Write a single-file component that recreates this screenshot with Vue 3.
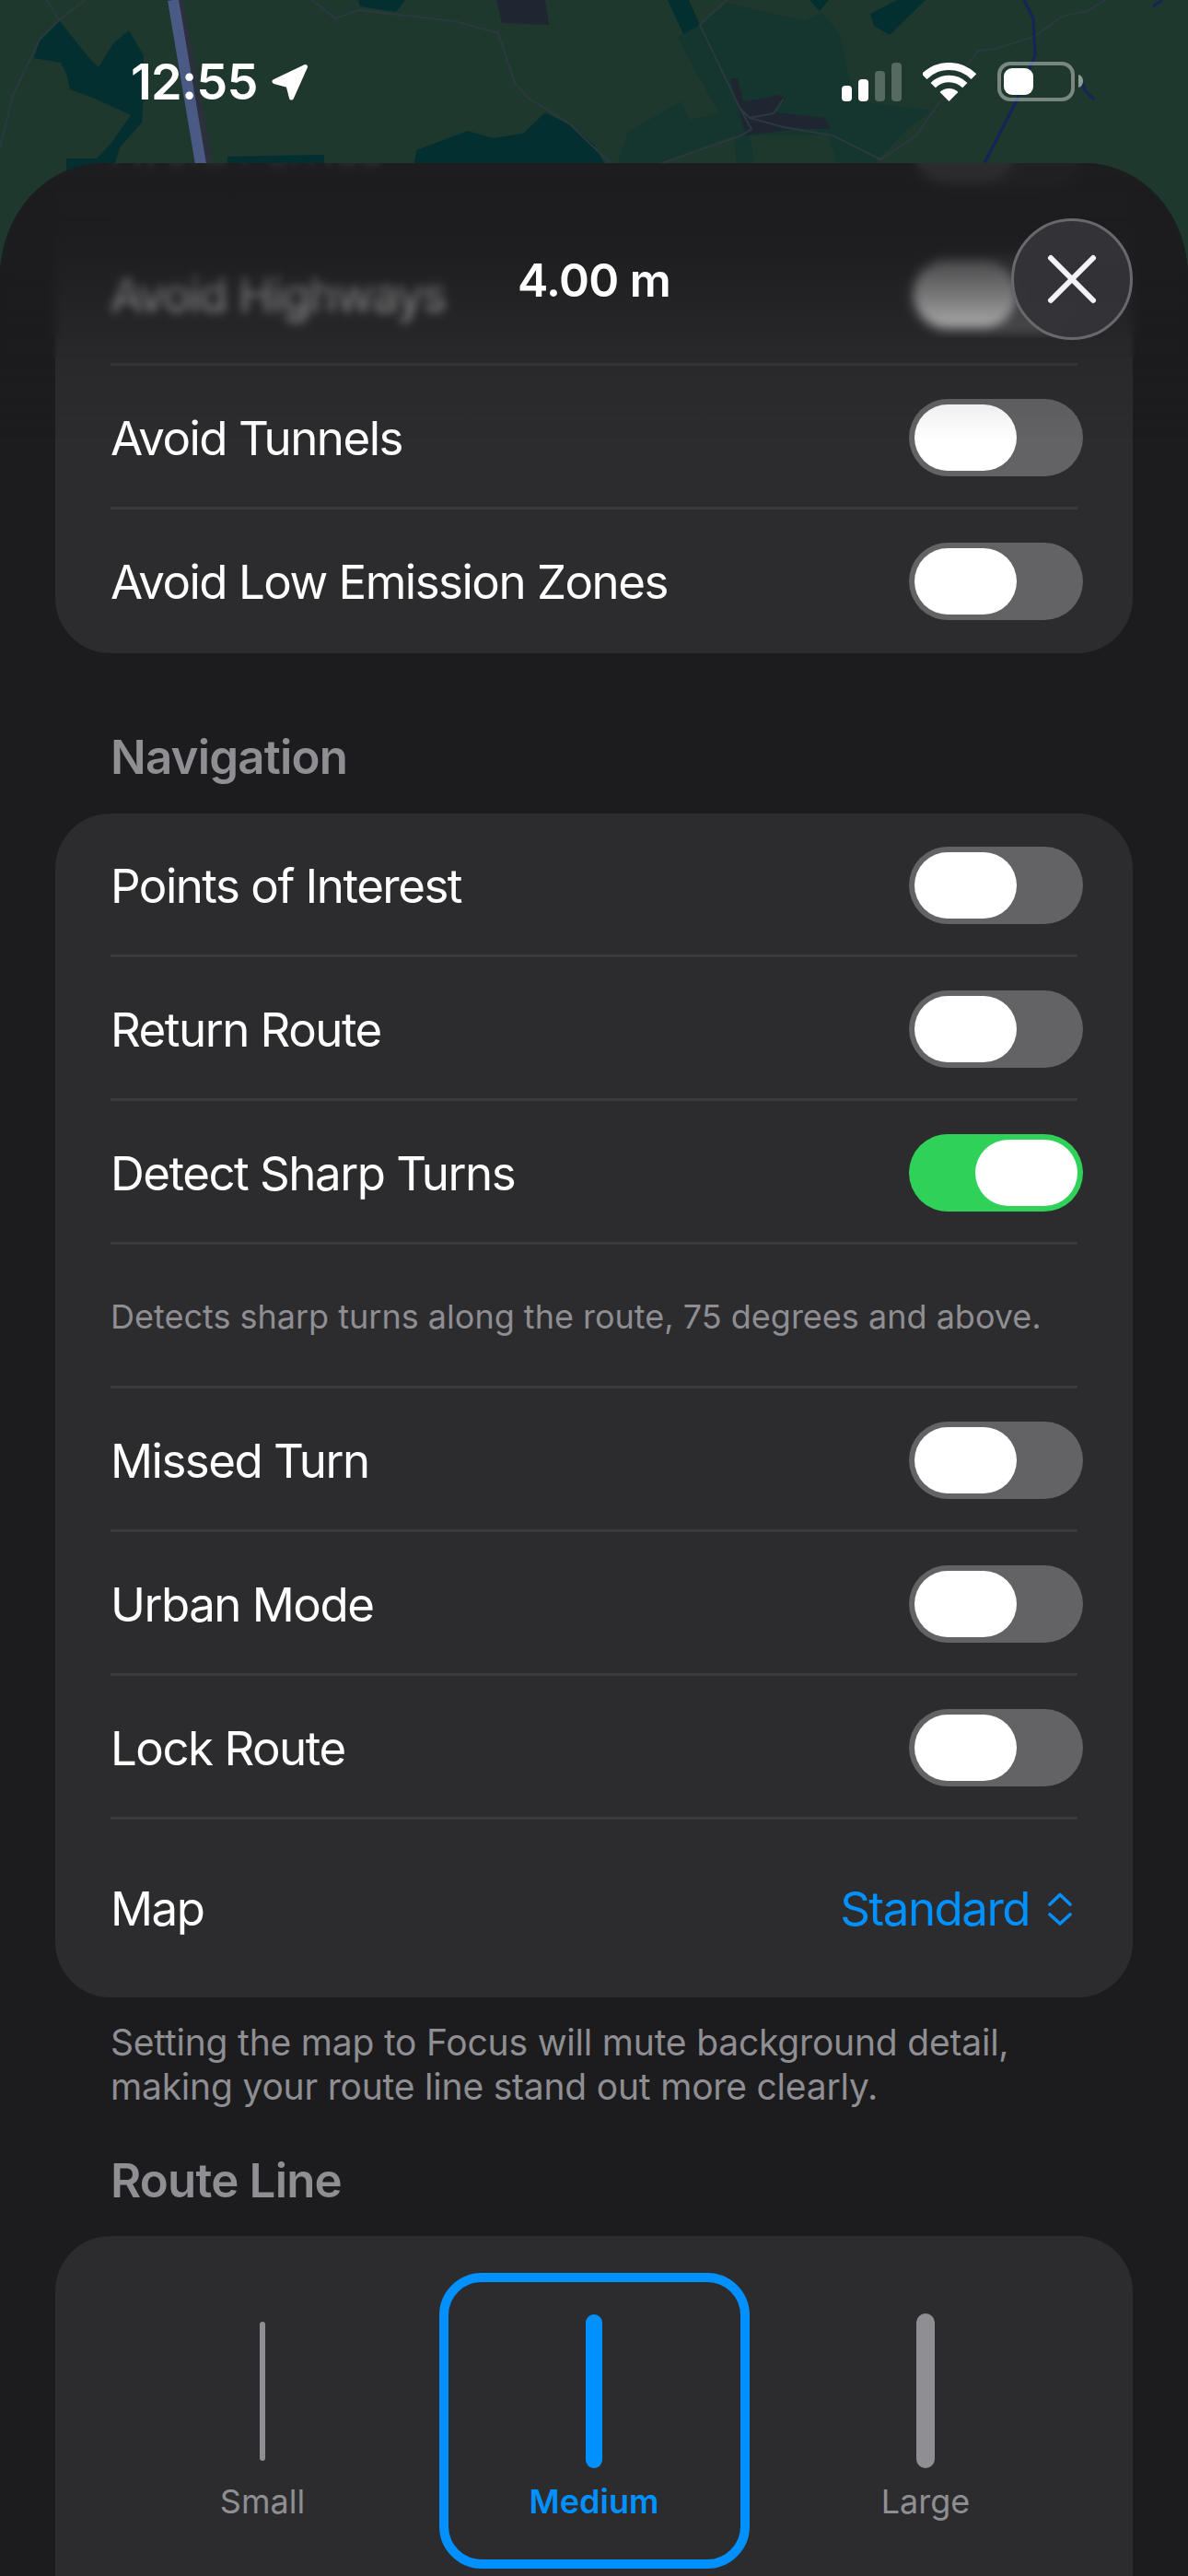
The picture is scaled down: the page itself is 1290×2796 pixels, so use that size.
<template>
  <div class="screen">
    <!-- map behind the sheet -->
    <svg class="map" width="1290" height="190" viewBox="0 0 1290 190">
      <polygon fill="#15352f" points="760,27 789,3 875,23 892,13 912,37 921,80 933,110 1011,120 986,140 953,173 953,190 912,190 900,147 814,147 822,190 801,190 797,147 715,177 666,190 682,143 740,110 748,130 781,123 735,40" />
      <g fill="#032f30">
        <polygon points="64,22 43,43 37,63 66,68 72,80 76,97 103,107 142,125 121,155 105,172 72,172 72,190 121,190 130,160 154,133 156,100 156,60 140,33 123,47 107,73 97,63" />
        <polygon points="389,0 391,7 430,13 440,0" />
        <polygon points="448,190 452,163 508,142 535,150 568,145 592,122 621,137 645,157 663,190" />
        <polygon points="247,170 352,168 352,190 247,190" />
        <polygon points="725,0 748,0 760,27 742,37" />
        <polygon points="879,0 900,0 890,12" />
        <polygon points="1005,0 974,30 966,38 949,28 945,15 974,0" />
      </g>
      <g fill="#1f2632">
        <polygon points="539,0 545,25 596,27 592,0" />
        <polygon points="793,85 801,85 807,110 847,103 853,107 842,122 896,128 902,140 867,140 842,143 810,147 803,123" />
      </g>
      <g fill="none" stroke="#2b393e" stroke-width="2">
        <polyline points="51,0 64,22 92,0" />
        <polyline points="64,22 43,43 14,103 0,160" />
        <polyline points="339,0 364,20 389,11 494,23 541,36 559,90 572,105 619,135 645,160 663,177" />
        <polyline points="789,0 760,27 803,117 814,128 840,123 851,107" />
        <polyline points="803,117 816,140 805,147 719,177" />
        <polyline points="814,128 851,138 904,147 956,173 995,147 1023,107 1056,63 1062,55 1081,53 1122,40 1155,17 1180,12 1200,0" />
      </g>
      <g fill="none" stroke="#14255a" stroke-width="3">
        <polyline points="1112,0 1122,20 1124,60 1102,113 1069,177" />
        <polyline points="1176,90 1178,98 1188,108" />
        <polyline points="1262,0 1252,7" />
      </g>
      <line x1="193" y1="0" x2="227" y2="190" stroke="#2b303c" stroke-width="12" />
      <line x1="188" y1="0" x2="220" y2="190" stroke="#4a5a85" stroke-width="12" />
    </svg>

    <div class="status">
      <div class="clock">
        <span class="time">12:55</span>
        <svg class="arrow" width="41" height="40" viewBox="0 0 41 40">
          <path d="M37.5 3.5 L4 19.5 L19 23.5 L22.5 37 Z" fill="#fff" stroke="#fff" stroke-width="5" stroke-linejoin="round" />
        </svg>
      </div>
      <div class="indicators">
        <svg width="65" height="42" viewBox="0 0 65 42">
          <rect x="0" y="25" width="11" height="17" rx="4" fill="#fff" />
          <rect x="18" y="18" width="11" height="24" rx="4" fill="#fff" />
          <rect x="36" y="9" width="11" height="33" rx="4" fill="#fff" opacity="0.25" />
          <rect x="54" y="0" width="11" height="42" rx="4" fill="#fff" opacity="0.25" />
        </svg>
        <svg width="58" height="42" viewBox="0 0 58 42">
          <path d="M1.6 15.1 A38 38 0 0 1 55.4 15.1" fill="none" stroke="#fff" stroke-width="8" />
          <path d="M11.2 24.7 A24.5 24.5 0 0 1 45.8 24.7" fill="none" stroke="#fff" stroke-width="7.5" />
          <path d="M28.5 42 L18.6 32.1 A14 14 0 0 1 38.4 32.1 Z" fill="#fff" />
        </svg>
        <svg width="94" height="44" viewBox="0 0 94 44">
          <rect x="2" y="2" width="80" height="39" rx="12" fill="none" stroke="#fff" stroke-opacity="0.4" stroke-width="4" />
          <rect x="7" y="7" width="32" height="29" rx="9" fill="#fff" />
          <path d="M88 14 C91.5 15 93 18 93 21 C93 24 91.5 27 88 28 Z" fill="#fff" opacity="0.5" />
        </svg>
      </div>
    </div>

    <div class="sheet">
      <div class="content">
        <div class="card first">
          <div v-for="row in avoidRows" :key="row" class="row">
            <div class="row-inner">
              <span>{{ row }}</span>
              <div class="toggle"><div class="thumb"></div></div>
            </div>
          </div>
        </div>

        <h3 class="section">Navigation</h3>
        <div class="card">
          <div v-for="row in navRows" :key="row.label" class="row">
            <div class="row-inner">
              <span v-if="row.help" class="help">{{ row.label }}</span>
              <span v-else>{{ row.label }}</span>
              <div v-if="!row.help" class="toggle" :class="{ on: row.on }"><div class="thumb"></div></div>
            </div>
          </div>
          <div class="row map-row">
            <div class="row-inner">
              <span>Map</span>
              <div class="picker">
                <span>Standard</span>
                <svg width="26" height="36" viewBox="0 0 26 36">
                  <path d="M2 13 L13 2.5 L24 13 M2 24 L13 34 L24 24" fill="none" stroke="#0091ff" stroke-width="3.6" stroke-linecap="round" stroke-linejoin="round" />
                </svg>
              </div>
            </div>
          </div>
        </div>
        <p class="note">Setting the map to Focus will mute background detail,<br>making your route line stand out more clearly.</p>

        <h3 class="section route">Route Line</h3>
        <div class="card widths">
          <div v-for="opt in lineOptions" :key="opt.label" class="option" :class="{ selected: opt.selected }">
            <div class="bar-slot">
              <div class="bar" :style="{ width: opt.w + 'px', height: opt.h + 'px' }"></div>
            </div>
            <span>{{ opt.label }}</span>
          </div>
        </div>
      </div>

      <div class="blur soft"></div>
      <div class="blur strong"></div>
      <div class="fade"></div>
      <div class="title">4.00 m</div>
      <button class="close">
        <svg width="56" height="56" viewBox="0 0 56 56">
          <path d="M5 5 L51 51 M51 5 L5 51" stroke="#f2f2f7" stroke-width="6" stroke-linecap="round" />
        </svg>
      </button>
    </div>
  </div>
</template>

<script setup>
const avoidRows = ['Avoid Ferries', 'Avoid Highways', 'Avoid Tunnels', 'Avoid Low Emission Zones']

const navRows = [
  { label: 'Points of Interest' },
  { label: 'Return Route' },
  { label: 'Detect Sharp Turns', on: true },
  { label: 'Detects sharp turns along the route, 75 degrees and above.', help: true },
  { label: 'Missed Turn' },
  { label: 'Urban Mode' },
  { label: 'Lock Route' },
]

const lineOptions = [
  { label: 'Small', w: 6, h: 151 },
  { label: 'Medium', w: 18, h: 167, selected: true },
  { label: 'Large', w: 20, h: 168 },
]
</script>

<style scoped>
.screen {
  position: relative;
  width: 1290px;
  height: 2796px;
  overflow: hidden;
  background: #1e382e;
  font-family: Inter, "Liberation Sans", sans-serif;
  color: #fff;
}

.map {
  position: absolute;
  top: 0;
  left: 0;
}

.status {
  position: relative;
  height: 177px;
  box-sizing: border-box;
  padding: 0 113px 0 142px;
  display: flex;
  align-items: center;
  justify-content: space-between;
}

.clock {
  display: flex;
  align-items: center;
  gap: 14px;
}

.time {
  font-size: 54px;
  font-weight: 600;
  letter-spacing: -0.8px;
  line-height: 60px;
}

.indicators {
  display: flex;
  align-items: center;
  gap: 23px;
}

.sheet {
  position: relative;
  height: 2619px;
  overflow: hidden;
  background: #1c1c1e;
  border-radius: 112px 112px 0 0 / 124px 124px 0 0;
}

.content {
  padding: 0 60px;
}

.card {
  background: #2c2c2e;
  border-radius: 60px;
  overflow: hidden;
}

.card.first {
  margin-top: -92px;
}

.row {
  height: 156px;
  padding: 0 60px;
  font-size: 51px;
  letter-spacing: -1.5px;
}

.row-inner {
  height: 100%;
  box-sizing: border-box;
  padding-top: 3px;
  border-bottom: 3px solid #3a3a3c;
  display: flex;
  align-items: center;
  justify-content: space-between;
}

.row:last-child .row-inner {
  border-bottom-color: transparent;
}

.help {
  font-size: 36px;
  letter-spacing: 0;
  color: #8e8e93;
  white-space: nowrap;
}

.toggle {
  width: 189px;
  height: 84px;
  margin-right: -6px;
  padding: 6px;
  box-sizing: border-box;
  border-radius: 42px;
  background: #636366;
  display: flex;
}

.toggle.on {
  background: #30d158;
  justify-content: flex-end;
}

.thumb {
  width: 111px;
  height: 72px;
  border-radius: 36px;
  background: #fff;
}

.map-row {
  height: 193px;
}

.picker {
  display: flex;
  align-items: center;
  gap: 20px;
  margin-right: 6px;
  color: #0091ff;
}

.section {
  margin: 0;
  padding-left: 60px;
  font-size: 51px;
  font-weight: 600;
  letter-spacing: -0.8px;
  line-height: 60px;
  color: #8e8e93;
}

.card + .section,
.first + .section {
  margin-top: 83px;
  margin-bottom: 31px;
}

.note {
  margin: 25px 0 0;
  padding-left: 60px;
  font-size: 39px;
  letter-spacing: -0.2px;
  line-height: 48px;
  color: #8e8e93;
}

.section.route {
  margin-top: 48px;
  margin-bottom: 30px;
}

.widths {
  height: 500px;
  box-sizing: border-box;
  padding: 40px 45px 0;
  display: grid;
  grid-template-columns: repeat(3, 1fr);
  align-items: start;
  justify-items: center;
}

.option {
  width: 337px;
  height: 321px;
  box-sizing: border-box;
  padding-top: 34px;
  border: 10px solid transparent;
  border-radius: 46px;
  display: flex;
  flex-direction: column;
  align-items: center;
  font-size: 36px;
  line-height: 48px;
  color: #8e8e93;
}

.option.selected {
  border-color: #0091ff;
  color: #0091ff;
  font-weight: 600;
}

.bar-slot {
  height: 168px;
  margin-bottom: 12px;
  display: flex;
  align-items: center;
}

.bar {
  border-radius: 10px;
  background: #8e8e93;
}

.selected .bar {
  background: #0091ff;
}

.blur {
  position: absolute;
  top: 0;
  left: 0;
  right: 0;
}

.blur.soft {
  height: 212px;
  backdrop-filter: blur(2px);
}

.blur.strong {
  height: 190px;
  backdrop-filter: blur(5px);
}

.fade {
  position: absolute;
  top: 0;
  left: 0;
  right: 0;
  height: 310px;
  background: linear-gradient(
    to bottom,
    rgba(28, 28, 30, 0.93) 0,
    rgba(28, 28, 30, 0.96) 63px,
    rgba(28, 28, 30, 0.76) 113px,
    rgba(28, 28, 30, 0.6) 143px,
    rgba(28, 28, 30, 0.42) 173px,
    rgba(28, 28, 30, 0.14) 223px,
    rgba(28, 28, 30, 0) 300px
  );
}

.title {
  position: absolute;
  top: 97px;
  left: 0;
  right: 0;
  text-align: center;
  font-size: 50px;
  font-weight: 600;
  letter-spacing: -0.6px;
  line-height: 60px;
}

.close {
  position: absolute;
  top: 60px;
  left: 1098px;
  width: 132px;
  height: 132px;
  padding: 0;
  box-sizing: border-box;
  border: 3px solid #68686d;
  border-radius: 50%;
  background: rgba(52, 52, 56, 0.96);
  display: flex;
  align-items: center;
  justify-content: center;
}
</style>

<style>
html, body {
  background: #1c1c1e;
}
</style>
